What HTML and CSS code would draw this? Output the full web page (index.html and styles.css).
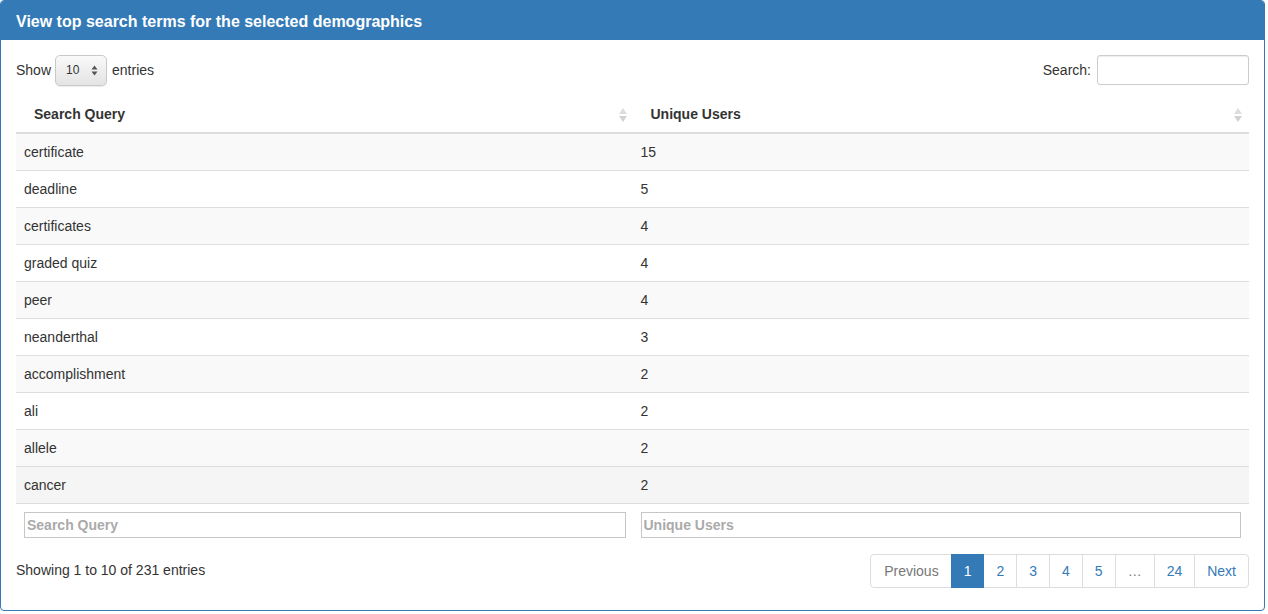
FILE: index.html
```html
<!DOCTYPE html>
<html>
<head>
<meta charset="utf-8">
<link rel="stylesheet" href="styles.css">
</head>
<body>
<div class="panel">
  <div class="panel-heading">View top search terms for the selected demographics</div>
  <div class="panel-body">
    <div class="controls">
      <div class="length">
        <span>Show</span>
        <span class="select"><span class="select-val">10</span>
          <svg class="select-arrows" width="7" height="11" viewBox="0 0 7 11"><path d="M3.5 0.5 L6.5 4.5 L0.5 4.5 Z M3.5 10.5 L6.5 6.5 L0.5 6.5 Z" fill="#555"/></svg>
        </span>
        <span>entries</span>
      </div>
      <div class="filter">
        <span>Search:</span>
        <input class="search-input" type="text">
      </div>
    </div>
    <table class="data">
      <colgroup><col class="c1"><col class="c2"></colgroup>
      <thead>
        <tr>
          <th>Search Query<svg class="sort" width="8" height="14" viewBox="0 0 8 14"><path d="M4 0 L8 6 L0 6 Z" fill="#ddd"/><path d="M4 14 L8 8 L0 8 Z" fill="#d2d2d2"/></svg></th>
          <th>Unique Users<svg class="sort" width="8" height="14" viewBox="0 0 8 14"><path d="M4 0 L8 6 L0 6 Z" fill="#ddd"/><path d="M4 14 L8 8 L0 8 Z" fill="#d2d2d2"/></svg></th>
        </tr>
      </thead>
      <tbody>
        <tr><td>certificate</td><td>15</td></tr>
        <tr><td>deadline</td><td>5</td></tr>
        <tr><td>certificates</td><td>4</td></tr>
        <tr><td>graded quiz</td><td>4</td></tr>
        <tr><td>peer</td><td>4</td></tr>
        <tr><td>neanderthal</td><td>3</td></tr>
        <tr><td>accomplishment</td><td>2</td></tr>
        <tr><td>ali</td><td>2</td></tr>
        <tr><td>allele</td><td>2</td></tr>
        <tr class="hover"><td>cancer</td><td>2</td></tr>
      </tbody>
      <tfoot>
        <tr>
          <td><input class="foot-input" type="text" placeholder="Search Query"></td>
          <td><input class="foot-input" type="text" placeholder="Unique Users"></td>
        </tr>
      </tfoot>
    </table>
    <div class="bottom">
      <div class="info">Showing 1 to 10 of 231 entries</div>
      <ul class="pagination">
        <li class="disabled"><span>Previous</span></li>
        <li class="active"><span>1</span></li>
        <li><span>2</span></li>
        <li><span>3</span></li>
        <li><span>4</span></li>
        <li><span>5</span></li>
        <li class="disabled"><span>…</span></li>
        <li><span>24</span></li>
        <li><span>Next</span></li>
      </ul>
    </div>
  </div>
</div>
</body>
</html>
```
FILE: styles.css
```css
* { box-sizing: border-box; }
html, body { margin: 0; padding: 0; background: #fff; }
body {
  font-family: "Liberation Sans", Arial, sans-serif;
  font-size: 14px;
  line-height: 20px;
  color: #333;
}
.panel {
  width: 1265px;
  height: 611px;
  border: 1px solid #337ab7;
  border-radius: 4px;
  overflow: hidden;
}
.panel-heading {
  background: #337ab7;
  color: #fff;
  font-weight: bold;
  font-size: 16px;
  height: 39px;
  line-height: 18px;
  padding: 12px 15px 9px;
}
.panel-body {
  padding: 14px 15px 15px;
}
.controls {
  display: flex;
  justify-content: space-between;
  align-items: center;
  height: 32px;
}
.length, .filter {
  display: flex;
  align-items: center;
}
.length .select {
  display: inline-flex;
  align-items: center;
  justify-content: space-between;
  width: 52px;
  height: 31px;
  margin: 0 5px 0 4px;
  padding: 0 8px 0 10px;
  border: 1px solid #c9c9c9;
  border-radius: 5px;
  background: linear-gradient(#f9f9f9, #e4e4e4);
  box-shadow: 0 1px 1px rgba(0,0,0,0.08);
  font-size: 12px;
  color: #333;
}
.filter span { margin-right: 6px; }
.search-input {
  width: 152px;
  height: 30px;
  border: 1px solid #ccc;
  border-radius: 3px;
  font-size: 12px;
  padding: 5px 10px;
  box-shadow: inset 0 1px 1px rgba(0,0,0,0.075);
  margin-right: 0;
  outline: none;
}
table.data {
  width: 100%;
  border-collapse: collapse;
  margin-top: 10px;
  table-layout: fixed;
}
col.c1 { width: 617px; }
col.c2 { width: 615px; }
table.data th {
  position: relative;
  text-align: left;
  font-weight: bold;
  padding: 8px 30px 8px 18px;
  border-bottom: 2px solid #ddd;
  line-height: 20px;
}
table.data th + th { padding-left: 17px; }
table.data th .sort {
  position: absolute;
  right: 7px;
  top: 12px;
}
table.data td {
  padding: 8px;
  border-top: 1px solid #ddd;
  line-height: 20px;
}
table.data td + td { padding-left: 7px; }
table.data tbody tr:nth-child(odd) td { background: #f9f9f9; }
table.data tbody tr.hover td { background: #f5f5f5; }
.foot-input {
  display: block;
  width: 100%;
  height: 26px;
  border: 1px solid #c6c6c6;
  padding: 2px 2px;
  font-family: "Liberation Sans", Arial, sans-serif;
  font-size: 14px;
  font-weight: bold;
  outline: none;
}
.foot-input::placeholder { color: #aaa; font-weight: bold; }
.bottom {
  display: flex;
  justify-content: space-between;
  align-items: flex-start;
  margin-top: 6px;
}
.info { padding-top: 8px; }
.pagination {
  display: flex;
  list-style: none;
  margin: 2px 0 0;
  padding: 0;
}
.pagination li span {
  display: block;
  padding: 6px 12px;
  line-height: 20px;
  border: 1px solid #ddd;
  margin-left: -1px;
  color: #337ab7;
  background: #fff;
}
.pagination li:first-child span {
  margin-left: 0;
  border-radius: 4px 0 0 4px;
  padding-left: 13px;
}
.pagination li:last-child span { border-radius: 0 4px 4px 0; }
.pagination li.disabled span { color: #777; }
.pagination li.active span {
  background: #337ab7;
  border-color: #337ab7;
  color: #fff;
  position: relative;
}
```
